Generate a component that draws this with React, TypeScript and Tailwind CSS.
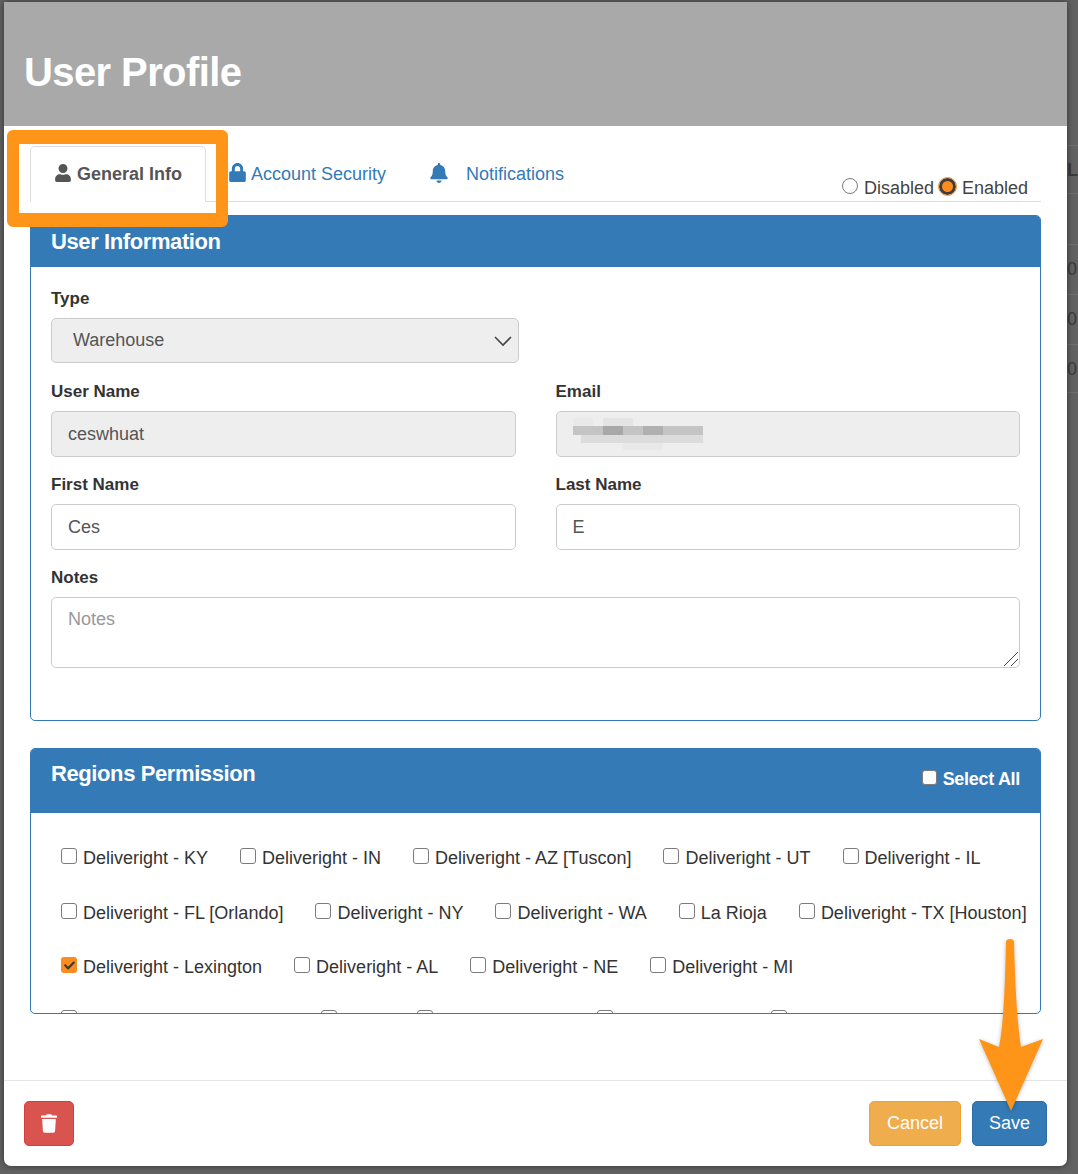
import { FaUser, FaLock, FaBell, FaTrash, FaCheck } from "react-icons/fa";

function Box({ checked }: { checked?: boolean }) {
  return checked ? (
    <span className="flex h-4 w-4 shrink-0 items-center justify-center rounded-[3px] bg-[#fb8c1e] text-[#3a3a3a] -translate-y-[2px]">
      <FaCheck className="h-[11px] w-[11px]" />
    </span>
  ) : (
    <span className="block h-4 w-4 shrink-0 rounded-[3px] border border-[#7b7b7b] bg-white -translate-y-[2px]" />
  );
}

function Region({ label, checked }: { label: string; checked?: boolean }) {
  return (
    <div className="flex items-center gap-[6px] text-[18px] leading-[20px] text-[#333]">
      <Box checked={checked} />
      <span>{label}</span>
    </div>
  );
}

function Label({ children }: { children: string }) {
  return <div className="mb-[9px] h-[20px] text-[17px] font-bold leading-[20px] text-[#333]">{children}</div>;
}

function Field({ label, value, disabled }: { label: string; value: string; disabled?: boolean }) {
  return (
    <div className="flex-1">
      <Label>{label}</Label>
      <div className={`flex h-[46px] items-center rounded-[5px] border border-[#ccc] px-4 text-[18px] text-[#555] ${disabled ? "bg-[#eee]" : "bg-white"}`}>
        {value}
      </div>
    </div>
  );
}

const rows = [
  ["Deliveright - KY", "Deliveright - IN", "Deliveright - AZ [Tuscon]", "Deliveright - UT", "Deliveright - IL"],
  ["Deliveright - FL [Orlando]", "Deliveright - NY", "Deliveright - WA", "La Rioja", "Deliveright - TX [Houston]"],
  ["Deliveright - Lexington", "Deliveright - AL", "Deliveright - NE", "Deliveright - MI"],
];

const pixels: [number, number, number, number, string][] = [
  [0, 8, 130, 9, "#c4c4c4"], [30, 8, 20, 9, "#a8a8a8"], [70, 8, 20, 9, "#b0b0b0"], [8, 17, 122, 8, "#dcdcdc"],
  [30, 0, 30, 8, "#e4e4e4"], [50, 25, 40, 7, "#e8e8e8"], [0, 0, 20, 8, "#e9e9e9"],
];

export default function App() {
  return (
    <div className="relative h-[1174px] w-[1078px] overflow-hidden bg-[#626262] pl-[4px] pt-[2px] font-['Liberation_Sans',Arial,sans-serif]">
      {/* page behind the dialog */}
      <div className="absolute right-0 top-[145px] w-[11px] text-[#3a3a3a]">
        <div className="h-[49px] border-y border-[#707070] text-[18px] font-bold leading-[48px]">L</div>
        <div className="h-[51px] border-b border-[#707070]" />
        <div className="h-[50px] border-b border-[#707070] text-[18px] leading-[48px]">0</div>
        <div className="h-[50px] border-b border-[#707070] text-[18px] leading-[48px]">0</div>
        <div className="h-[48px] border-b border-[#707070] text-[18px] leading-[48px]">0</div>
      </div>

      <div className="relative flex h-[1164px] w-[1063px] flex-col overflow-hidden rounded-b-[7px] bg-white shadow-[0_0_6px_rgba(0,0,0,0.5)]">
        <header className="flex h-[124px] shrink-0 items-start bg-[#a9a9a9] pl-5 pt-[45px]">
          <h1 className="text-[40px] font-bold leading-[50px] tracking-[-0.6px] text-white">User Profile</h1>
        </header>

        <main className="flex min-h-0 flex-1 flex-col px-[26px]">
          {/* tabs */}
          <nav className="mt-[20px] flex h-[56px] shrink-0 border-b border-[#ddd]">
            <div className="-mb-px flex h-[56px] w-[176px] items-start justify-center rounded-t-[5px] border border-b-0 border-[#ddd] bg-white pt-[16px] text-[18px] font-bold leading-[22px] text-[#555]">
              <FaUser className="mr-[5px] mt-[1px] h-[18px] w-[18px]" />
              General Info
            </div>
            <div className="ml-[23px] flex items-start pt-[17px] text-[18px] leading-[22px] text-[#337ab7]">
              <FaLock className="mr-[5px] h-[19px] w-[17px]" />
              Account Security
            </div>
            <div className="ml-[44px] flex items-start pt-[17px] text-[18px] leading-[22px] text-[#337ab7]">
              <FaBell className="mr-[18px] h-[20px] w-[18px]" />
              Notifications
            </div>
            <div className="ml-auto mr-[13px] mt-[29px] flex items-center text-[18px] leading-[20px] text-[#444]">
              <span className="mr-[6px] h-4 w-4 -translate-y-[2px] rounded-full border border-[#7b7b7b]" />
              <span>Disabled</span>
              <span className="ml-[5px] mr-[6px] h-[17px] w-[17px] -translate-y-[2px] rounded-full border-[3px] border-[#3d3d3d] bg-[#fb8c1e] outline outline-1 outline-[#fb8c1e]" />
              <span>Enabled</span>
            </div>
          </nav>

          {/* user information */}
          <section className="mt-[13px] h-[506px] shrink-0 overflow-hidden rounded-[5px] border border-[#337ab7]">
            <div className="flex h-[51px] items-center bg-[#337ab7] px-5 text-[22px] font-bold tracking-[-0.4px] text-white">User Information</div>
            <div className="flex flex-col gap-[19px] px-5 pt-[22px]">
              <div>
                <Label>Type</Label>
                <div className="flex h-[45px] w-[468px] items-center justify-between rounded-[5px] border border-[#ccc] bg-[#eee] pl-[21px] pr-[5px] text-[18px] text-[#555]">
                  Warehouse
                  <svg viewBox="0 0 20 12" className="h-[12px] w-[20px]" fill="none" stroke="#444" strokeWidth="1.6"><path d="M2 2l8 8 8-8" /></svg>
                </div>
              </div>
              <div className="flex gap-10">
                <Field label="User Name" value="ceswhuat" disabled />
                <div className="flex-1">
                  <Label>Email</Label>
                  <div className="relative flex h-[46px] items-center rounded-[5px] border border-[#ccc] bg-[#eee]">
                    <svg viewBox="0 0 130 34" className="absolute left-4 top-[6px] h-[34px] w-[130px]">
                      {pixels.map(([x, y, w, h, c], i) => (
                        <rect key={i} x={x} y={y} width={w} height={h} fill={c} />
                      ))}
                    </svg>
                  </div>
                </div>
              </div>
              <div className="-mt-[1px] flex gap-10">
                <Field label="First Name" value="Ces" />
                <Field label="Last Name" value="E" />
              </div>
              <div className="-mt-[1px]">
                <Label>Notes</Label>
                <div className="relative h-[71px] rounded-[5px] border border-[#ccc] bg-white px-4 pt-[10px] text-[18px] leading-[22px] text-[#999]">
                  Notes
                  <svg viewBox="0 0 16 16" className="absolute bottom-0 right-0 h-4 w-4" fill="none" stroke="#444" strokeWidth="1"><path d="M1 15L15 1M8 15l7-7" /></svg>
                </div>
              </div>
            </div>
          </section>

          {/* regions */}
          <section className="mt-[27px] h-[266px] shrink-0 overflow-hidden rounded-[5px] border border-[#337ab7]">
            <div className="flex h-[64px] items-start justify-between bg-[#337ab7] px-5 text-white">
              <div className="pt-[12px] text-[22px] font-bold leading-[26px] tracking-[-0.4px]">Regions Permission</div>
              <div className="flex items-center gap-[6px] pt-[20px] text-[18px] font-bold leading-[20px] tracking-[-0.3px]">
                <span className="h-[15px] w-[15px] -translate-y-[2px] rounded-[3px] border border-[#7b7b7b] bg-white" />
                Select All
              </div>
            </div>
            <div className="flex flex-col gap-[34.5px] pl-[30px] pt-[35px]">
              {rows.map((row, i) => (
                <div key={i} className={`flex ${i === 1 ? "gap-[32px]" : "gap-[32px]"}`}>
                  {row.map((r) => (
                    <Region key={r} label={r} checked={r === "Deliveright - Lexington"} />
                  ))}
                </div>
              ))}
              <div className="flex">
                <div className="w-[260px]"><Box /></div>
                <div className="w-[96px]"><Box /></div>
                <div className="w-[180px]"><Box /></div>
                <div className="w-[174px]"><Box /></div>
                <Box />
              </div>
            </div>
          </section>
        </main>

        <footer className="flex h-[86px] shrink-0 items-start justify-between border-t border-[#e5e5e5] px-5 pt-[20px]">
          <button className="flex h-[45px] w-[50px] items-center justify-center rounded-[5px] border border-[#d43f3a] bg-[#d9534f] text-white">
            <FaTrash className="h-[19px] w-[16px]" />
          </button>
          <div className="flex gap-[11px]">
            <button className="h-[45px] w-[92px] rounded-[5px] border border-[#eea236] bg-[#f0ad4e] text-[18px] text-white">Cancel</button>
            <button className="h-[45px] w-[75px] rounded-[5px] border border-[#2e6da4] bg-[#337ab7] text-[18px] text-white">Save</button>
          </div>
        </footer>
      </div>

      {/* annotation: highlight around the first tab */}
      <div className="absolute left-[7px] top-[130px] h-[97px] w-[221px] rounded-[6px] border-x-[12px] border-b-[14px] border-t-[14px] border-[#fe9518]" />

      {/* annotation: arrow pointing at Save */}
      <svg viewBox="0 0 64 176" className="absolute left-[979px] top-[937px] h-[176px] w-[64px] drop-shadow-[0_1px_2px_rgba(0,0,0,0.25)]">
        <path d="M27 5 C27 1 35 1 35 5 C36 45 38 85 42 110 L64 102 L32 174 L0 102 L20 110 C25 85 26 45 27 5 Z" fill="#fe9518" />
      </svg>
    </div>
  );
}
